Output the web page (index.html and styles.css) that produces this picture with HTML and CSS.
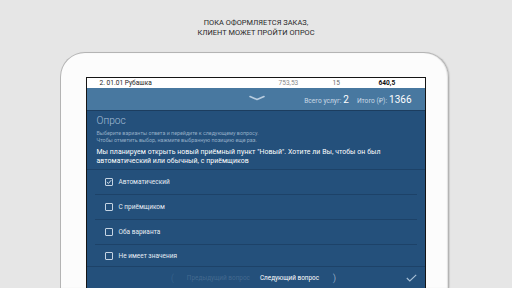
FILE: index.html
```html
<!DOCTYPE html>
<html lang="ru">
<head>
<meta charset="utf-8">
<link rel="stylesheet" href="styles.css">
</head>
<body>
<div class="caption">ПОКА ОФОРМЛЯЕТСЯ ЗАКАЗ,<br>КЛИЕНТ МОЖЕТ ПРОЙТИ ОПРОС</div>
<div class="tablet">
  <div class="screen">
    <div class="order-row">
      <span class="name">2. 01.01 Рубашка</span>
      <span class="price">753,53</span>
      <span class="qty">15</span>
      <span class="sum">640,5</span>
    </div>
    <div class="summary">
      <svg class="chev" width="16" height="6" viewBox="0 0 16 6"><path d="M1 1.5 L8 4.5 L15 1.5" fill="none" stroke="#b9cde0" stroke-width="1.6" stroke-linecap="round" stroke-linejoin="round"/></svg>
      <div class="totals">
        <span class="lbl">Всего услуг:</span><span class="val">2</span>
        <span class="lbl gap">Итого (₽):</span><span class="val">1366</span>
      </div>
    </div>
    <div class="survey">
      <div class="intro">
        <div class="title">Опрос</div>
        <div class="hint">Выберите варианты ответа и перейдите к следующему вопросу.<br>Чтобы отметить выбор, нажмите выбранную позицию еще раз.</div>
        <div class="question">Мы планируем открыть новый приёмный пункт "Новый". Хотите ли Вы, чтобы он был<br>автоматический или обычный, с приёмщиков</div>
      </div>
      <ul class="options">
        <li class="opt"><span class="box"><svg width="6" height="6" viewBox="0 0 6 6"><path d="M0.8 3 L2.4 4.5 L5.2 1.2" fill="none" stroke="#d5e1ec" stroke-width="1"/></svg></span>Автоматический</li>
        <li class="opt"><span class="box"></span>С приёмщиком</li>
        <li class="opt"><span class="box"></span>Оба варианта</li>
        <li class="opt last"><span class="box"></span>Не имеет значения</li>
      </ul>
      <div class="nav">
        <div></div>
        <div class="nav-mid">
          <span class="paren">(</span>
          <span class="prev">Предыдущий вопрос</span>
          <span class="next">Следующий вопрос</span>
          <span class="paren light">)</span>
        </div>
        <svg class="done" width="11" height="8" viewBox="0 0 11 8"><path d="M0.8 4 L3.8 7 L10.2 0.8" fill="none" stroke="#a9c0d7" stroke-width="1.1"/></svg>
      </div>
    </div>
  </div>
</div>
</body>
</html>
```
FILE: styles.css
```css
html, body {
  margin: 0;
  padding: 0;
}
body {
  width: 512px;
  height: 288px;
  overflow: hidden;
  background: #e6e6e6;
  font-family: Roboto, "Noto Sans", sans-serif;
}
.caption {
  padding-top: 18px;
  text-align: center;
  font-size: 7.4px;
  line-height: 9.5px;
  color: #262626;
  letter-spacing: 0.05px;
}
.tablet {
  margin: 15px 0 0 60px;
  width: 389px;
  height: 236px;
  background: #fcfcfc;
  border: 1.5px solid #b4b4b4;
  border-bottom: none;
  border-radius: 25px 25px 0 0;
  box-shadow: inset -1px 0 1px #e0e0e0, 1px 0 1px #cfcfcf;
  padding: 23.5px 0 0 24.5px;
  box-sizing: border-box;
  display: flex;
}
.screen {
  width: 340px;
  border: 1.2px solid #151515;
  border-bottom: none;
  box-sizing: border-box;
  background: #24507b;
  display: flex;
  flex-direction: column;
  overflow: hidden;
}
.order-row {
  height: 10px;
  flex-shrink: 0;
  background: #ffffff;
  display: grid;
  grid-template-columns: 179px 54px 46px auto;
  align-items: center;
  font-size: 6.6px;
  color: #1e1e1e;
  padding-left: 13px;
}
.order-row .price { color: #8a8a8a; }
.order-row .qty { color: #6a6a6a; }
.order-row .sum { font-weight: 700; color: #111; }
.summary {
  height: 22px;
  flex-shrink: 0;
  background: #4878a0;
  border-bottom: 1.5px solid #1c3d5f;
  display: flex;
  align-items: center;
  position: relative;
}
.chev {
  position: absolute;
  left: 162px;
  top: 7px;
}
.totals {
  margin-left: auto;
  padding-right: 13px;
  display: flex;
  align-items: baseline;
  padding-top: 2px;
}
.lbl {
  font-size: 6.6px;
  color: #c9d8e6;
  margin-right: 2px;
}
.lbl.gap { margin-left: 8px; }
.val {
  font-size: 10px;
  color: #ffffff;
}
.survey {
  flex: 1;
  display: flex;
  flex-direction: column;
}
.intro {
  padding: 4px 10px 0 10px;
  border-bottom: 1px solid #1d4268;
}
.title {
  font-size: 10.2px;
  line-height: 12px;
  color: #a6bfd7;
  font-weight: 300;
}
.hint {
  margin-top: 3px;
  font-size: 5.35px;
  line-height: 7px;
  color: #93adc6;
}
.question {
  margin-top: 4px;
  font-size: 6.95px;
  line-height: 9px;
  color: #ffffff;
  padding-bottom: 3px;
  letter-spacing: 0.05px;
}
.options {
  list-style: none;
  margin: 0;
  padding: 0 8px;
}
.opt {
  height: 24px;
  border-bottom: 1px solid #1d4268;
  display: flex;
  align-items: center;
  padding-left: 10px;
  font-size: 6.5px;
  color: #e6edf4;
}
.opt.last {
  height: 19px;
  border-bottom: none;
  padding-top: 2px;
}
.box {
  width: 8px;
  height: 8px;
  box-sizing: border-box;
  border: 1px solid #c5d4e3;
  border-radius: 1px;
  margin-right: 6px;
  display: flex;
  align-items: center;
  justify-content: center;
}
.nav {
  border-top: 1px solid #1d4268;
  height: 22px;
  flex-shrink: 0;
  display: grid;
  grid-template-columns: 1fr auto 1fr;
  align-items: center;
  padding-right: 8px;
}
.nav-mid {
  display: flex;
  align-items: center;
  font-size: 6.4px;
  padding-left: 4px;
}
.paren {
  font-size: 9px;
  font-weight: 300;
  color: #3f6a93;
  margin-right: 13px;
}
.paren.light {
  color: #c5d4e3;
  margin: 0 0 0 14px;
}
.prev { color: #43698f; margin-right: 10px; }
.next { color: #ffffff; }
.done {
  justify-self: end;
}
```
